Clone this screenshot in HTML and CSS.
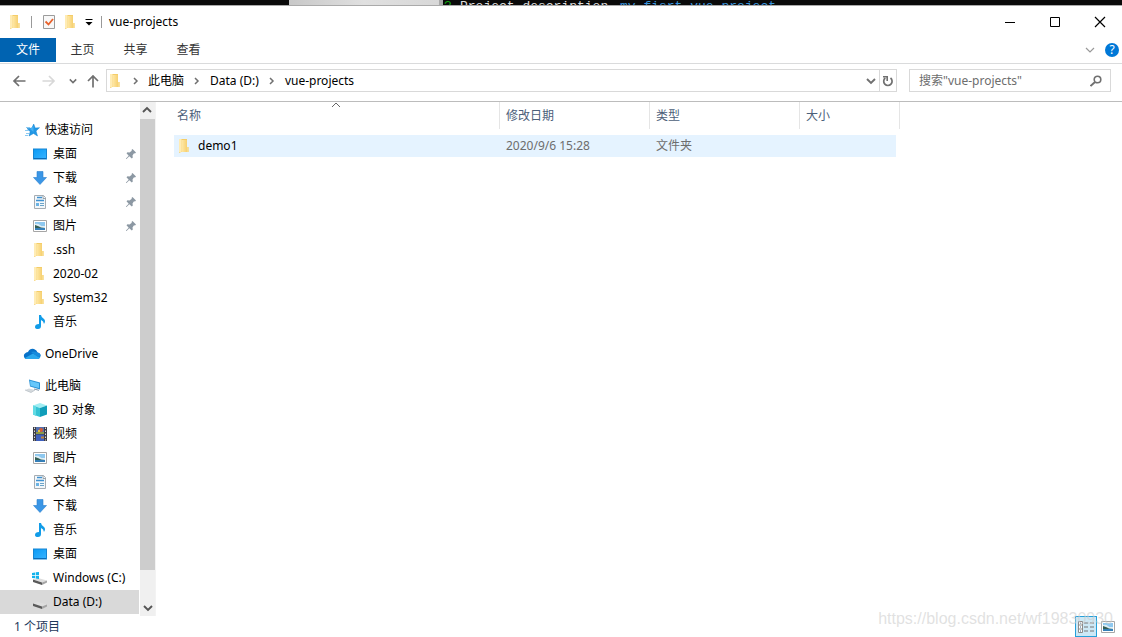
FILE: index.html
```html
<!DOCTYPE html>
<html lang="zh-CN">
<head>
<meta charset="utf-8">
<title>vue-projects</title>
<link rel="stylesheet" href="styles.css">
</head>
<body>
<svg class="sprite" aria-hidden="true">
  <defs>
    <linearGradient id="gold" x1="0" x2="1"><stop offset="0" stop-color="#ffe9a8"/><stop offset="1" stop-color="#f6d071"/></linearGradient>
    <linearGradient id="screen" x1="0" y1="0" x2="1" y2="1"><stop offset="0" stop-color="#0c9bf5"/><stop offset="1" stop-color="#35b2ff"/></linearGradient>
  </defs>
  <symbol id="folder" viewBox="0 0 16 16"><path d="M2 1h8v8h1.500v5H4l-2 1z" fill="#f4cd69"/><path d="M2 1h2.500v12L3.500 15 2 13.500z" fill="#ffecb5"/><path d="M4.500 2H10v12H4.500z" fill="url(#gold)"/><path d="M10 9h1.500v5H10z" fill="#f9dc8c"/></symbol>
  <symbol id="desktop" viewBox="0 0 16 16"><path d="M1 2.500h14v11H1z" fill="#1585d3"/><path d="M2 3.500h12v8.500H2z" fill="url(#screen)"/><path d="M2 12h12v.8H2z" fill="#0a65b0"/></symbol>
  <symbol id="download" viewBox="0 0 16 16"><path d="M5 1.500h6v6h3.500L8 14.500 1.500 7.500H5z" fill="#3a96e6" stroke="#2c80cc" stroke-width=".6"/></symbol>
  <symbol id="document" viewBox="0 0 16 16"><path d="M2.500 1.500h9l2 2v11h-11z" fill="#f3f7fa" stroke="#a6adb3"/><path d="M5 3.500h5M4 6.500h8" stroke="#3f91d0" stroke-width="1.300"/><path d="M4 9h3v3H4z" fill="#6bb3e4"/><path d="M8 9.500h4M8 11.500h4" stroke="#6ba4c8"/><path d="M11 1.500v3h3" fill="none" stroke="#9aa3aa"/></symbol>
  <symbol id="picture" viewBox="0 0 16 16"><path d="M1.500 2.500h13v11h-13z" fill="#fff" stroke="#a6a6a6"/><path d="M3 4h10v4H3z" fill="#8ec8ef"/><path d="M3 6q3-1 5 1t5 1v2H3z" fill="#dcecf4"/><path d="M3 7q4 1 6 2.500l4 .5v1H3z" fill="#345f55"/><path d="M3 10h10v2H3z" fill="#357fb7"/></symbol>
  <symbol id="music" viewBox="0 0 16 16"><path d="M7 1h2q0 2 3 4 2 2 0 5-.3-3-3-4v6q0 3-3 3-3 0-3-2 0-3 4-3z" fill="#119ce8"/></symbol>
  <symbol id="star" viewBox="0 0 16 16"><path d="M8.700 2l1.500 4 4.300-.3-3.500 3.300 1.500 5L8.500 11.500 4 14l1.200-4.500L2 6.500l4.800-.4z" fill="#2197e5" stroke="#1785d3" stroke-width=".5"/><path d="M1 5.500h4M0 8.500h4M1 11.500h3M0 13.500h3" stroke="#8ccaf1"/><path d="M8.500 4v6L5 7z" fill="#45b0f3"/></symbol>
  <symbol id="cloud" viewBox="0 0 18 16"><path d="M1.500 12Q0 9 2 7.500 3 6 5 6q2-4 6-3 3 1 3.500 3.500Q18 7 17.500 10q-.5 3-3 3H4q-2 0-2.500-1z" fill="#0872c9"/><path d="M2 12l8-4.500 5 3 2.300.5q-.8 2-2.800 2H4q-1.500 0-2-1z" fill="#2aa8ed"/><path d="M8 6q3-1 6.500.5 3 .5 3 3.500L15 11l-5-3.500z" fill="#168bdc"/></symbol>
  <symbol id="computer" viewBox="0 0 16 16"><path d="M4 1.500l11 3v7L5 8.500z" fill="#2b92d5"/><path d="M5 2.800l9 2.500v4.700L5.500 7.700z" fill="#66c7fa"/><path d="M0 12l4-1.500 6 1.500-4 2.500z" fill="#d5dade"/><path d="M0 12l6 2.500 4-2.500" fill="none" stroke="#b9c0c6" stroke-width=".8"/><path d="M9 11l5 1.300" stroke="#8296a7"/></symbol>
  <symbol id="cube" viewBox="0 0 16 16"><path d="M1 3.500L8 1l7 2.500L8 6z" fill="#a0edf2"/><path d="M1 3.500L8 6v9l-7-2.500z" fill="#35c3d4"/><path d="M15 3.500L8 6v9l7-2.500z" fill="#109db9"/><path d="M1 3.500l3 1V14l-3-1.500z" fill="#62dbe4"/></symbol>
  <symbol id="video" viewBox="0 0 16 16"><path d="M1 1h14v14H1z" fill="#3d3d45"/><path d="M4 1h8v7H4z" fill="#536fae"/><path d="M4 8.500h8V15H4z" fill="#3f60bc"/><path d="M4 6h8v2H4z" fill="#8d9947"/><circle cx="9" cy="4" r="2" fill="#d65c32"/><path d="M6 4h2v2H6z" fill="#e9c03d"/><path d="M9 10.500h3v2H9z" fill="#c2843b"/><path d="M2.500 1.500v13M13.500 1.500v13" stroke="#ddd" stroke-dasharray="1.500 1.500"/></symbol>
  <symbol id="drive" viewBox="0 0 16 16"><path d="M1 9.500L6 8l9 2.500-5 2z" fill="#dedede"/><path d="M1 9.500l9 3v2.500l-9-3z" fill="#5a5a5a"/><path d="M10 12.500l5-2v2l-5 2.500z" fill="#a5a5a5"/></symbol>
  <symbol id="windrive" viewBox="0 0 16 16"><use href="#drive"/><path d="M0 3l3-.5V5H0zM3.700 2.300L7 2v3H3.700zM0 5.700h3v2.600L0 8zM3.700 5.700H7V9l-3.300-.5z" fill="#14b3ec"/></symbol>
  <symbol id="pin" viewBox="0 0 12 12"><path d="M7.500 1l3.500 3.500-1 1-1-.3L7.500 7.500l.3 2-1 1L4.300 8.300 1.500 11H1v-.5L3.700 7.700 1.500 5.200l1-1 2 .3 2.300-1.700L6.500 2z" fill="#8c98a3"/></symbol>
  <symbol id="chev" viewBox="0 0 10 10"><path d="M1 3L5 7l4-4" fill="none" stroke="currentColor" stroke-width="1.900"/></symbol>
  <symbol id="right" viewBox="0 0 10 10"><path d="M3 2L6 5 3 8" fill="none" stroke="currentColor" stroke-width="1.500"/></symbol>
  <symbol id="arrow" viewBox="0 0 14 14"><path d="M7 2L2 7l5 5M2 7h11.500" fill="none" stroke="currentColor" stroke-width="1.700"/></symbol>
</svg>

<div class="backdrop" aria-hidden="true">
  <div class="backdrop-window"></div>
  <div class="terminal"><span class="ask">?</span><span class="question">Project description</span><span class="answer">my fisrt vue project</span></div>
</div>

<header>
  <div class="titlebar">
    <svg class="icon"><use href="#folder"/></svg>
    <span class="divider"></span>
    <button class="quick" aria-label="属性"><svg class="icon" viewBox="0 0 16 16"><path d="M2.500 1.500h11v13h-11z" fill="#f8f8f8" stroke="#9b9b9b"/><path d="M4.500 7.500l3 3L12 5" fill="none" stroke="#e8622c" stroke-width="1.800"/></svg></button>
    <button class="quick folder-button" aria-label="新建文件夹"><svg class="icon"><use href="#folder"/></svg></button>
    <button class="quick" aria-label="自定义快速访问工具栏"><svg class="small" viewBox="0 0 10 10"><path d="M1.500 2.500h7" stroke="#000"/><path d="M1.500 5h7L5 8.500z"/></svg></button>
    <span class="divider last"></span>
    <h1>vue-projects</h1>
    <div class="window-controls">
      <button aria-label="最小化"><svg viewBox="0 0 12 12"><path d="M1 6.500h10" stroke="#000"/></svg></button>
      <button aria-label="最大化"><svg viewBox="0 0 12 12"><path d="M1.500 1.500h9v9h-9z" fill="none" stroke="#000"/></svg></button>
      <button aria-label="关闭"><svg viewBox="0 0 12 12"><path d="M1 1l10 10M11 1L1 11" stroke="#000" stroke-width="1.200"/></svg></button>
    </div>
  </div>
  <nav class="ribbon">
    <button class="file">文件</button><button>主页</button><button>共享</button><button>查看</button>
    <div class="ribbon-end">
      <button class="expand" aria-label="展开功能区"><svg class="small" viewBox="0 0 10 10"><path d="M1 3l4 4 4-4" fill="none" stroke="#999" stroke-width="1.200"/></svg></button>
      <button class="help" aria-label="帮助">?</button>
    </div>
  </nav>
  <div class="navbar">
    <div class="history">
      <button aria-label="后退"><svg viewBox="0 0 14 14"><use href="#arrow"/></svg></button>
      <button class="forward" aria-label="前进" disabled><svg viewBox="0 0 14 14"><use href="#arrow"/></svg></button>
      <button class="recent" aria-label="最近位置"><svg viewBox="0 0 10 10"><use href="#chev"/></svg></button>
      <button class="up" aria-label="上移"><svg viewBox="0 0 14 14"><use href="#arrow"/></svg></button>
    </div>
    <div class="address">
      <svg class="icon"><use href="#folder"/></svg>
      <svg class="crumb"><use href="#right"/></svg><a href="#pc">此电脑</a>
      <svg class="crumb"><use href="#right"/></svg><a href="#data">Data (D:)</a>
      <svg class="crumb"><use href="#right"/></svg><a href="#vue">vue-projects</a>
      <button class="drop" aria-label="以前的位置"><svg class="small"><use href="#chev"/></svg></button>
      <button class="refresh" aria-label="刷新"><svg viewBox="0 0 12 12"><path d="M8.500 3A4.200 4.200 0 1 1 3.300 3" fill="none" stroke="#707070" stroke-width="1.700"/><path d="M1 1.700h4.200V6" fill="none" stroke="#707070" stroke-width="1.600"/></svg></button>
    </div>
    <form class="search" role="search">
      <input type="text" aria-label="搜索" placeholder='搜索"vue-projects"'>
      <button type="button" aria-label="搜索"><svg viewBox="0 0 12 12"><circle cx="7.500" cy="4.500" r="3.300" fill="none" stroke="#707070" stroke-width="1.600"/><path d="M5 7L.5 11" stroke="#707070" stroke-width="1.900"/></svg></button>
    </form>
  </div>
</header>

<div class="body">
  <aside>
    <nav class="tree">
      <a class="root" href="#quick"><svg class="icon"><use href="#star"/></svg>快速访问</a>
      <a href="#desktop1"><svg class="icon"><use href="#desktop"/></svg>桌面<svg class="pin"><use href="#pin"/></svg></a>
      <a href="#download1"><svg class="icon"><use href="#download"/></svg>下载<svg class="pin"><use href="#pin"/></svg></a>
      <a href="#document1"><svg class="icon"><use href="#document"/></svg>文档<svg class="pin"><use href="#pin"/></svg></a>
      <a href="#picture1"><svg class="icon"><use href="#picture"/></svg>图片<svg class="pin"><use href="#pin"/></svg></a>
      <a href="#ssh"><svg class="icon"><use href="#folder"/></svg>.ssh</a>
      <a href="#feb"><svg class="icon"><use href="#folder"/></svg>2020-02</a>
      <a href="#system"><svg class="icon"><use href="#folder"/></svg>System32</a>
      <a href="#music1"><svg class="icon"><use href="#music"/></svg>音乐</a>
      <a class="root group" href="#onedrive"><svg class="icon cloud"><use href="#cloud"/></svg>OneDrive</a>
      <a class="root group" href="#pc"><svg class="icon"><use href="#computer"/></svg>此电脑</a>
      <a href="#objects"><svg class="icon"><use href="#cube"/></svg>3D 对象</a>
      <a href="#videos"><svg class="icon"><use href="#video"/></svg>视频</a>
      <a href="#picture2"><svg class="icon"><use href="#picture"/></svg>图片</a>
      <a href="#document2"><svg class="icon"><use href="#document"/></svg>文档</a>
      <a href="#download2"><svg class="icon"><use href="#download"/></svg>下载</a>
      <a href="#music2"><svg class="icon"><use href="#music"/></svg>音乐</a>
      <a href="#desktop2"><svg class="icon"><use href="#desktop"/></svg>桌面</a>
      <a href="#c"><svg class="icon"><use href="#windrive"/></svg>Windows (C:)</a>
      <a class="selected" href="#data"><svg class="icon"><use href="#drive"/></svg>Data (D:)</a>
    </nav>
    <div class="scrollbar">
      <button class="scroll-up" aria-label="向上滚动"><svg class="small"><use href="#chev"/></svg></button>
      <div class="track"><div class="thumb"></div></div>
      <button aria-label="向下滚动"><svg class="small"><use href="#chev"/></svg></button>
    </div>
  </aside>
  <main>
    <table>
      <thead><tr><th class="name">名称<svg class="sort" viewBox="0 0 10 6"><path d="M1 5l4-4 4 4" fill="none" stroke="#666"/></svg></th><th class="date">修改日期</th><th class="type">类型</th><th class="size">大小</th></tr></thead>
      <tbody><tr><td><a href="#demo1"><svg class="icon"><use href="#folder"/></svg>demo1</a></td><td>2020/9/6 15:28</td><td>文件夹</td><td></td></tr></tbody>
    </table>
  </main>
</div>

<footer>
  <span class="count">1 个项目</span>
  <div class="views">
    <button class="view active" aria-label="详细信息"><svg viewBox="0 0 18 16"><path d="M1.500 2.500h4v11h-4zM1.500 6h4M1.500 10h4" fill="#fff" stroke="#8b8b8b"/><path d="M3 4.200h1M3 8h1M3 12h1" stroke="#375e83"/><path d="M7 4h4M13 4h4M7 8h4M13 8h4M7 12h4M13 12h4" stroke="#777"/></svg></button>
    <button class="view" aria-label="大图标"><svg class="icon"><use href="#picture"/></svg></button>
  </div>
</footer>
<div class="watermark">https://blog.csdn.net/wf19830930</div>
</body>
</html>
```

FILE: styles.css
```css
* { box-sizing: border-box; }
body { margin: 0; height: 100vh; display: flex; flex-direction: column; overflow: hidden; background: #fff; color: #000; font: 12px/16px "Noto Sans", "Noto Sans CJK SC", sans-serif; }
button { padding: 0; border: 0; background: none; font: inherit; color: inherit; display: flex; align-items: center; justify-content: center; }
a { color: inherit; text-decoration: none; }
svg { flex: none; display: block; }
.sprite { position: absolute; width: 0; height: 0; }
.icon { width: 16px; height: 16px; }
.small { width: 10px; height: 10px; }

.backdrop { flex: none; height: 5px; display: flex; overflow: hidden; background: #0a0a0a; padding-left: 289px; }
.backdrop-window { width: 154px; background: linear-gradient(90deg, #c8c8c8, #e0e0e0 50%, #d8d8d8); border-right: 4px solid #aaa; }
.terminal { display: flex; font: 13px/14px "Liberation Mono", monospace; color: #ddd; white-space: nowrap; }
.ask { width: 17px; padding-left: 1px; color: #13a10e; }
.question { width: 160px; }
.answer { color: #3a96dd; }

header { flex: none; }
.titlebar { height: 32px; display: flex; align-items: center; padding-left: 8px; border-top: 1px solid #aaa; }
.divider { width: 1px; height: 12px; margin: 0 9px 0 7px; background: #999; }
.divider.last { margin: 0 7px; }
.folder-button { margin: 0 5px 0 6px; }
h1 { margin: 0; font-size: 12px; font-weight: 400; }
.window-controls { display: flex; margin-left: auto; }
.window-controls button { width: 45px; height: 31px; }
.window-controls svg { width: 12px; height: 12px; }
.ribbon { height: 27px; display: flex; align-items: center; color: #333; border-bottom: 1px solid #dadbdc; }
.ribbon > button { width: 53px; height: 24px; }
.ribbon > .file { width: 56px; background: #0063b1; color: #fff; }
.ribbon-end { display: flex; align-items: center; gap: 10px; margin-left: auto; padding-right: 3px; }
.help { width: 14px; height: 14px; border-radius: 50%; background: #0078d7; color: #fff; }
.navbar { height: 38px; display: flex; align-items: center; padding: 0 11px 4px 0; border-bottom: 1px solid #bcbcbc; }
.history { display: flex; width: 106px; padding-left: 12px; align-items: center; color: #707070; }
.history svg { width: 14px; height: 14px; }
.history .forward { color: #d8d8d8; margin-left: 16px; transform: scaleX(-1); }
.history .recent { margin-left: 13px; }
.history .recent svg { width: 8px; height: 8px; }
.history .up { margin-left: 9px; transform: rotate(90deg); }
.address { flex: 1; height: 23px; display: flex; align-items: center; padding-left: 1px; border: 1px solid #d9d9d9; }
.crumb { width: 10px; height: 10px; margin: 0 7px; color: #707070; }
a + .crumb { margin: 0 8px; }
.drop { margin-left: auto; width: 16px; height: 21px; color: #707070; }
.refresh { width: 17px; height: 21px; border-left: 1px solid #d9d9d9; }
.refresh svg { width: 12px; height: 12px; }
.search { display: flex; width: 202px; height: 23px; margin-left: 12px; border: 1px solid #d9d9d9; }
.search input { flex: 1; min-width: 0; border: 0; padding: 0 0 0 9px; font: inherit; background: none; }
.search input::placeholder { color: #6d6d6d; opacity: 1; }
.search button { width: 28px; }
.search svg { width: 12px; height: 12px; }

.body { flex: 1; min-height: 0; display: flex; }
aside { width: 156px; flex: none; display: flex; border-right: 1px solid #f3f3f3; }
.tree { flex: 1; padding-top: 16px; overflow: hidden; }
.tree a { display: flex; align-items: center; height: 24px; gap: 5px; padding: 0 2px 0 32px; white-space: nowrap; }
.tree .root { padding-left: 25px; gap: 4px; }
.tree .cloud { width: 18px; margin-left: -2px; }
.tree .group { margin-top: 8px; }
.tree .selected { background: #d9d9d9; }
.pin { width: 12px; height: 12px; margin-left: auto; }
.scrollbar { width: 15px; margin-left: 1px; display: flex; flex-direction: column; background: #f0f0f0; color: #555; }
.scrollbar button { height: 17px; }
.scroll-up { transform: rotate(180deg); }
.track { flex: 1; }
.thumb { height: 94%; background: #cdcdcd; }

main { flex: 1; min-width: 0; padding-left: 18px; overflow: hidden; }
table { table-layout: fixed; width: 726px; border-spacing: 0; }
th { height: 27px; padding: 0 6px; text-align: left; font-weight: 400; color: #4c607a; border-right: 1px solid #e5e5e5; }
th.name { position: relative; width: 326px; padding-left: 3px; }
.date, .type { width: 150px; }
.size { width: 100px; }
.sort { position: absolute; top: 0; left: 50%; width: 10px; height: 6px; margin-left: -6px; }
td { height: 28px; padding: 0 6px; color: #6d6d6d; background: #e5f3ff; background-clip: padding-box; border-top: 6px solid transparent; }
td:first-child { padding-left: 3px; color: #000; }
td:last-child { border-right: 4px solid transparent; }
td a { display: flex; align-items: center; gap: 5px; }

footer { flex: none; height: 21px; display: flex; align-items: center; padding: 0 5px 0 14px; color: #1e395b; }
.count { padding-top: 1px; }
.views { display: flex; margin-left: auto; gap: 2px; }
.view { width: 18px; height: 21px; }
.view.active { width: 22px; background: #cce8f6; border: 1px solid #26a0da; }
.view.active svg { width: 18px; height: 16px; }
.watermark { position: absolute; right: 9px; bottom: 9px; font: 16px/18px "Liberation Sans", sans-serif; color: rgba(205, 205, 205, .6); pointer-events: none; }
```
